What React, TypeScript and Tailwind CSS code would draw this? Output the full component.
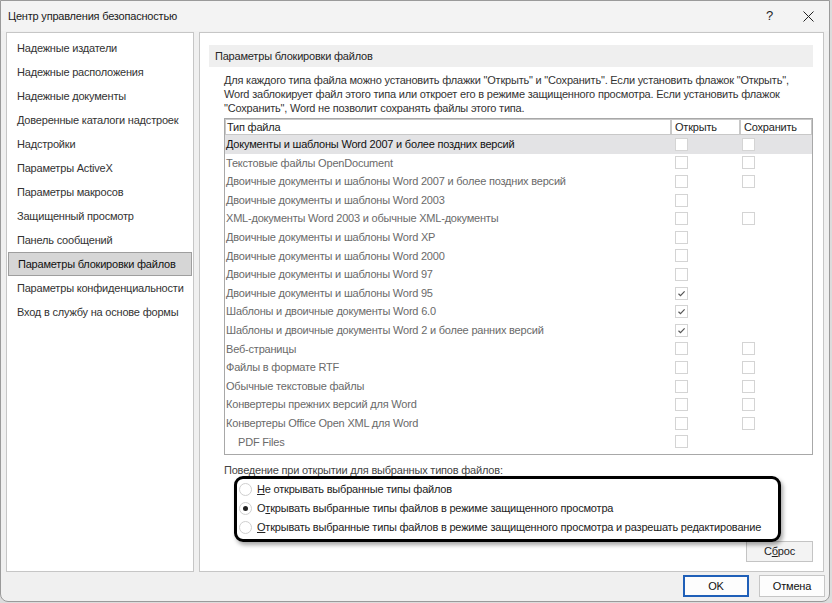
import React from 'react';

const sideItems = [
  'Надежные издатели',
  'Надежные расположения',
  'Надежные документы',
  'Доверенные каталоги надстроек',
  'Надстройки',
  'Параметры ActiveX',
  'Параметры макросов',
  'Защищенный просмотр',
  'Панель сообщений',
  'Параметры блокировки файлов',
  'Параметры конфиденциальности',
  'Вход в службу на основе формы',
];

type Row = { name: string; open: boolean; save?: boolean; selected?: boolean; indent?: boolean };

const rows: Row[] = [
  { name: 'Документы и шаблоны Word 2007 и более поздних версий', open: false, save: false, selected: true },
  { name: 'Текстовые файлы OpenDocument', open: false, save: false },
  { name: 'Двоичные документы и шаблоны Word 2007 и более поздних версий', open: false, save: false },
  { name: 'Двоичные документы и шаблоны Word 2003', open: false },
  { name: 'XML-документы Word 2003 и обычные XML-документы', open: false, save: false },
  { name: 'Двоичные документы и шаблоны Word XP', open: false },
  { name: 'Двоичные документы и шаблоны Word 2000', open: false },
  { name: 'Двоичные документы и шаблоны Word 97', open: false },
  { name: 'Двоичные документы и шаблоны Word 95', open: true },
  { name: 'Шаблоны и двоичные документы Word 6.0', open: true },
  { name: 'Шаблоны и двоичные документы Word 2 и более ранних версий', open: true },
  { name: 'Веб-страницы', open: false, save: false },
  { name: 'Файлы в формате RTF', open: false, save: false },
  { name: 'Обычные текстовые файлы', open: false, save: false },
  { name: 'Конвертеры прежних версий для Word', open: false, save: false },
  { name: 'Конвертеры Office Open XML для Word', open: false, save: false },
  { name: 'PDF Files', open: false, indent: true },
];

const Check = ({ checked }: { checked: boolean }) => (
  <div className="w-[13px] h-[13px] border border-[#d4d4d4] bg-white flex items-center justify-center">
    {checked && (
      <svg width="9" height="9" viewBox="0 0 9 9">
        <path d="M1.5 4.8 L3.5 6.6 L7.6 2.4" fill="none" stroke="#555" strokeWidth="1.2" />
      </svg>
    )}
  </div>
);

const Radio = ({ checked }: { checked: boolean }) => (
  <div className="w-[13px] h-[13px] rounded-full border border-[#cfcfcf] bg-white flex items-center justify-center">
    {checked && <div className="w-[5px] h-[5px] rounded-full bg-[#222]" />}
  </div>
);

export default function App() {
  return (
    <div className="w-[832px] h-[603px] bg-[#dcdcdc] font-['Liberation_Sans',Arial,sans-serif] text-[11px] tracking-[-0.2px] text-[#1e1e1e]">
      <div className="w-[830px] h-[602px] bg-[#f0f0f0] border border-[#9a9a9a] rounded-b-[8px] flex flex-col">
        {/* title bar */}
        <div className="h-[30px] shrink-0 flex items-center pl-[7px] bg-[#f3f3f3]">
          <span className="text-[#1a1a1a] text-[11px]">Центр управления безопасностью</span>
          <span className="ml-auto mr-[30px] text-[13px]">?</span>
          <svg width="11" height="11" viewBox="0 0 11 11" className="mr-[15px]">
            <path d="M0.5 0.5 L10.5 10.5 M10.5 0.5 L0.5 10.5" stroke="#222" strokeWidth="1" />
          </svg>
        </div>

        <div className="flex gap-[5px] pl-[5px] pt-[1px]">
          {/* left nav */}
          <div className="w-[188px] h-[540px] bg-white border border-[#c6c6c6] pt-[3px] pl-[1px] pr-[1px]">
            {sideItems.map((item, i) => (
              <div
                key={item}
                className={`h-[24px] flex items-center pl-[9px] ${
                  i === 9 ? 'bg-[#d6d6d6] border border-[#9e9e9e] pl-[8px] text-[#111]' : 'text-[#333]'
                }`}
              >
                {item}
              </div>
            ))}
          </div>

          {/* right panel */}
          <div className="w-[625px] h-[540px] bg-white border border-[#c6c6c6] pt-[12px] pl-[9px] pr-[10px] flex flex-col">
            <div className="h-[22px] bg-[#efefef] flex items-center pl-[6px] text-[#262626]">
              Параметры блокировки файлов
            </div>

            <div className="pl-[15px] pt-[6px]">
              <p className="leading-[14px] text-[#333] pr-[10px]">
                Для каждого типа файла можно установить флажки "Открыть" и "Сохранить". Если установить флажок "Открыть",
                Word заблокирует файл этого типа или откроет его в режиме защищенного просмотра. Если установить флажок
                "Сохранить", Word не позволит сохранять файлы этого типа.
              </p>

              <div className="mt-[3px] h-[337px] border border-[#a8a8a8] flex flex-col">
                <div className="h-[16px] flex text-[#1e1e1e] leading-[14px]">
                  <div className="w-[446px] border border-[#c8c8c8] pl-[1px]">Тип файла</div>
                  <div className="w-[69px] border border-[#c8c8c8] pl-[3px]">Открыть</div>
                  <div className="flex-1 border border-[#c8c8c8] pl-[3px]">Сохранить</div>
                </div>
                {rows.map((r) => (
                  <div
                    key={r.name}
                    className={`h-[18.6px] flex items-center ${r.selected ? 'bg-[#e3e3e5] text-[#111]' : 'text-[#6a6a6a]'}`}
                  >
                    <div className={`w-[446px] ${r.indent ? 'pl-[13px]' : 'pl-[1px]'}`}>{r.name}</div>
                    <div className="w-[68px] pl-[4px]">
                      <Check checked={r.open} />
                    </div>
                    <div className="pl-[3px]">{r.save !== undefined && <Check checked={r.save} />}</div>
                  </div>
                ))}
              </div>

              <div className="mt-[8px] text-[#444] leading-[14px]">Поведение при открытии для выбранных типов файлов:</div>

              <div className="relative ml-[13px] w-[544px] mt-[1px] pt-[2px] pb-[7px]">
                <div className="absolute -top-[2px] -left-[3px] w-[547px] h-[66px] border-[3px] border-black rounded-[9px] shadow-[2px_3px_4px_rgba(0,0,0,0.35)]" />
                {[
                  { pre: '', key: 'Н', post: 'е открывать выбранные типы файлов', checked: false },
                  { pre: 'О', key: 'т', post: 'крывать выбранные типы файлов в режиме защищенного просмотра', checked: true },
                  {
                    pre: '',
                    key: 'О',
                    post: 'ткрывать выбранные типы файлов в режиме защищенного просмотра и разрешать редактирование',
                    checked: false,
                  },
                ].map((o) => (
                  <div key={o.post} className="h-[19px] flex items-center gap-[5px] pl-[2px] text-[#222] whitespace-nowrap">
                    <Radio checked={o.checked} />
                    <span>
                      {o.pre}
                      <span className="underline">{o.key}</span>
                      {o.post}
                    </span>
                  </div>
                ))}
              </div>

              <div className="flex justify-end -mt-[3px]">
                <button className="w-[67px] h-[21px] bg-[#f3f3f3] border border-[#c4c4c4] text-[#222]">
                  С<span className="underline">б</span>рос
                </button>
              </div>
            </div>
          </div>
        </div>

        {/* bottom buttons */}
        <div className="flex justify-end gap-[10px] pr-[4px] pt-[3px]">
          <button className="w-[66px] h-[22px] bg-[#fdfdfd] border-2 border-[#1f5fb8] text-[#111]">OK</button>
          <button className="w-[66px] h-[22px] bg-[#fdfdfd] border border-[#c6c6c6] text-[#111]">Отмена</button>
        </div>
      </div>
    </div>
  );
}
